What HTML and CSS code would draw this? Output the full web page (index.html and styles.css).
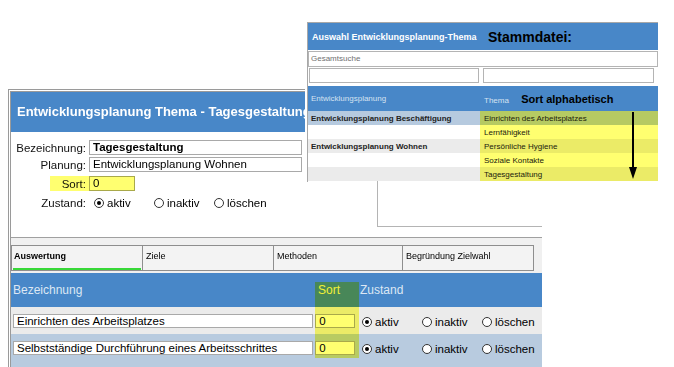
FILE: index.html
```html
<!DOCTYPE html>
<html lang="de">
<head>
    <meta charset="UTF-8">
    <title>Entwicklungsplanung Thema</title>
    <link rel="stylesheet" href="styles.css">
</head>
<body>
<div class="screen">

    <div class="panel">
        <div class="panel-head">Entwicklungsplanung Thema - Tagesgestaltung</div>

        <div class="form">
            <div class="row">
                <label class="lbl">Bezeichnung:</label>
                <div class="field wide bold">Tagesgestaltung</div>
            </div>
            <div class="row">
                <label class="lbl">Planung:</label>
                <div class="field wide">Entwicklungsplanung Wohnen</div>
            </div>
            <div class="row row-sort">
                <label class="lbl">Sort:</label>
                <div class="field short">0</div>
                <span class="mark mark-sort"></span>
            </div>
            <div class="row">
                <label class="lbl">Zustand:</label>
                <div class="opts">
                    <span class="opt"><i class="radio on"></i>aktiv</span>
                    <span class="opt"><i class="radio"></i>inaktiv</span>
                    <span class="opt"><i class="radio"></i>löschen</span>
                </div>
            </div>
        </div>

        <div class="tabs">
            <div class="tab active">Auswertung</div>
            <div class="tab">Ziele</div>
            <div class="tab narrow">Methoden</div>
            <div class="tab">Begründung Zielwahl</div>
        </div>

        <div class="grid">
            <div class="grid-head">
                <span class="c-name">Bezeichnung</span>
                <span class="c-sort">Sort</span>
                <span class="c-state">Zustand</span>
            </div>
            <div class="grid-row">
                <div class="c-name"><div class="field">Einrichten des Arbeitsplatzes</div></div>
                <div class="c-sort"><div class="field">0</div></div>
                <div class="opts">
                    <span class="opt"><i class="radio on"></i>aktiv</span>
                    <span class="opt"><i class="radio"></i>inaktiv</span>
                    <span class="opt"><i class="radio"></i>löschen</span>
                </div>
            </div>
            <div class="grid-row alt">
                <div class="c-name"><div class="field">Selbstständige Durchführung eines Arbeitsschrittes</div></div>
                <div class="c-sort"><div class="field">0</div></div>
                <div class="opts">
                    <span class="opt"><i class="radio on"></i>aktiv</span>
                    <span class="opt"><i class="radio"></i>inaktiv</span>
                    <span class="opt"><i class="radio"></i>löschen</span>
                </div>
            </div>
            <span class="mark mark-col"></span>
        </div>
    </div>

    <div class="frame"></div>

    <div class="picker">
        <div class="picker-box">
            <div class="picker-head">
                <span class="picker-title">Auswahl Entwicklungsplanung-Thema</span>
                <span class="note note-big">Stammdatei:</span>
            </div>
            <div class="search">Gesamtsuche</div>
            <div class="filters">
                <div class="filter left"></div>
                <div class="filter"></div>
            </div>
            <div class="colhead">
                <span class="p-left">Entwicklungsplanung</span>
                <span class="p-right">Thema <b class="note">Sort alphabetisch</b></span>
            </div>
            <div class="plist">
                <div class="prow sel"><span class="p-left bold">Entwicklungsplanung Beschäftigung</span><span class="p-right">Einrichten des Arbeitsplatzes</span></div>
                <div class="prow"><span class="p-left"></span><span class="p-right">Lernfähigkeit</span></div>
                <div class="prow grey"><span class="p-left bold">Entwicklungsplanung Wohnen</span><span class="p-right">Persönliche Hygiene</span></div>
                <div class="prow"><span class="p-left"></span><span class="p-right">Soziale Kontakte</span></div>
                <div class="prow grey"><span class="p-left"></span><span class="p-right">Tagesgestaltung</span></div>
                <span class="mark mark-list"></span>
                <svg class="arrow" width="16" height="70" viewBox="0 0 16 70">
                    <line x1="8" y1="1" x2="8" y2="58" stroke="#000" stroke-width="2"/>
                    <polygon points="4,56 12,56 8,68" fill="#000"/>
                </svg>
            </div>
        </div>
    </div>

</div>
</body>
</html>
```

FILE: styles.css
```css
body { margin: 0; background: #fff; color: #000; font-family: "Liberation Sans", Arial, sans-serif; }
.screen { position: relative; width: 674px; height: 367px; overflow: hidden; }
.bold { font-weight: bold; }

/* highlight markers, drawn over the screenshot */
.mark { position: absolute; background: rgb(255, 255, 112); mix-blend-mode: multiply; }

/* main window */
.panel { margin: 89px 0 0 8px; width: 531px; height: 290px; border-left: 3px double #9a9a9a; border-top: 3px double #9a9a9a; }
.panel-head { height: 40px; line-height: 40px; padding-left: 6px; background: #4887c8; color: #fff; font-size: 13px; font-weight: bold; white-space: nowrap; }

.form { height: 97px; padding-top: 8px; border-bottom: 1px solid #a0a0a0; font-size: 11.5px; }
.row { position: relative; display: flex; align-items: center; height: 15px; margin-bottom: 4px; }
.row:first-child { margin-bottom: 2px; }
.lbl { width: 78px; padding-right: 3px; box-sizing: border-box; text-align: right; color: #111; }
.field { height: 15px; box-sizing: border-box; padding-left: 3px; border: 1px solid #a9a9a9; background: #fff; font-size: 11.5px; line-height: 13px; white-space: nowrap; overflow: hidden; }
.wide { width: 213px; }
.short { width: 46px; }
.mark-sort { left: 39px; top: 0; width: 85px; height: 15px; }

.opts { display: flex; margin-left: 5px; font-size: 11.5px; }
.opt { display: flex; align-items: center; width: 60px; }
.radio { display: flex; align-items: center; justify-content: center; width: 10px; height: 10px; margin-right: 3px; box-sizing: border-box; border: 1px solid #333; border-radius: 50%; background: #fff; }
.radio.on::after { content: ""; width: 4px; height: 4px; border-radius: 50%; background: #000; }

/* tabs */
.tabs { display: flex; height: 28px; padding-top: 7px; background: #f0f0f0; font-size: 9px; }
.tab { width: 132px; height: 26px; margin-right: -1px; padding: 5px 3px 0; box-sizing: border-box; border: 1px solid #8e8e8e; background: #f3f3f3; }
.tab.narrow { width: 130px; }
.tab.active { font-weight: bold; padding-left: 2px; background: linear-gradient(#38d838, #38d838) no-repeat 1px 22px / 128px 2px, #f3f3f3; }

/* table */
.grid { position: relative; }
.grid-head { display: flex; align-items: center; height: 34px; background: #4887c8; color: #dde7f4; font-size: 12px; }
.c-name { width: 304px; padding-left: 2px; box-sizing: border-box; }
.c-sort { width: 44px; padding-left: 2px; box-sizing: border-box; }
.grid-head .c-sort { padding-left: 3px; color: #f0f07a; }
.grid-head .c-state { padding-left: 1px; }
.grid-row { display: flex; align-items: flex-start; height: 27px; padding-top: 7px; box-sizing: border-box; background: #ebebeb; }
.grid-row.alt { height: 33px; background: #b8cbdf; }
.grid-row .field { height: 14px; line-height: 12px; }
.grid-row .c-name .field { width: 300px; }
.grid-row .c-sort .field { width: 40px; }
.grid-row .opts { margin-top: 2px; }
.mark-col { left: 304px; top: 9px; width: 44px; height: 76px; }

/* window behind the picker */
.frame { position: absolute; left: 377px; top: 181px; width: 164px; height: 45px; border-left: 1px solid #b4b4b4; border-bottom: 1px solid #b4b4b4; }

/* Stammdatei picker window */
.picker { position: absolute; left: 305px; top: 22px; width: 353px; height: 159px; padding-left: 2px; box-sizing: border-box; background: #fff; font-size: 8px; }
.picker-box { height: 100%; border-left: 1px solid #a8a8a8; border-top: 1px solid #a8a8a8; }
.picker-head { display: flex; align-items: center; height: 27px; padding-left: 4px; background: #4887c8; white-space: nowrap; }
.picker-title { width: 176px; color: #fff; font-size: 9px; font-weight: bold; }
.note { color: #000; font-weight: bold; font-size: 11px; }
.note-big { font-size: 14px; }
.search { height: 16px; margin-top: 1px; padding-left: 2px; box-sizing: border-box; border: 1px solid #b4b4b4; line-height: 14px; color: #707070; }
.filters { display: flex; gap: 4px; padding: 1px 1px 0; height: 18px; box-sizing: border-box; }
.filter { width: 171px; height: 15px; box-sizing: border-box; border: 1px solid #b4b4b4; }
.filter.left { width: 170px; }
.colhead { display: flex; align-items: center; height: 25px; margin-top: 1px; background: #4887c8; color: #d5e2f1; white-space: nowrap; }
.p-left { width: 172px; padding-left: 3px; box-sizing: border-box; white-space: nowrap; }
.p-right { flex: 1; padding-left: 4px; white-space: nowrap; }
.colhead .note { margin-left: 10px; }
.plist { position: relative; }
.prow { display: flex; align-items: center; height: 14px; background: #fff; color: #222; }
.prow.sel { background: #b6cadf; }
.prow.grey { background: #ebebeb; }
.mark-list { left: 172px; right: 0; top: 0; bottom: 0; }
.arrow { position: absolute; left: 317px; top: 0; }
```
